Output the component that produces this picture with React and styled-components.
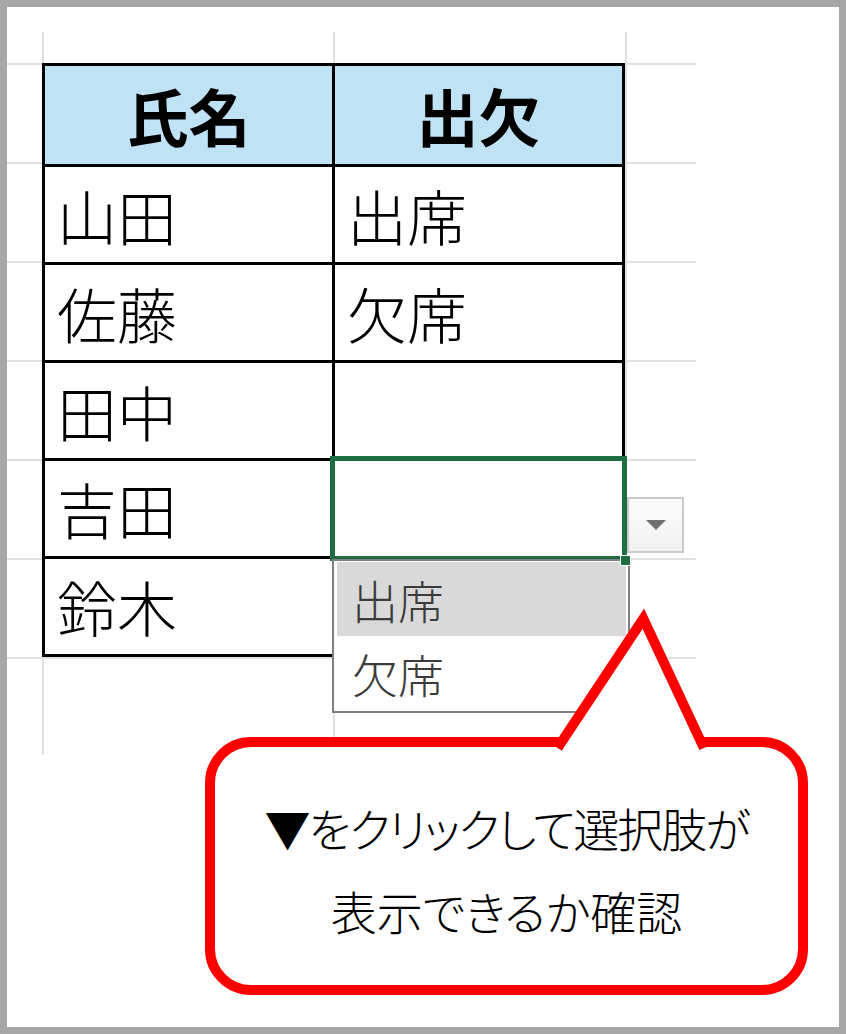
import React from 'react';
import styled, { createGlobalStyle } from 'styled-components';

const GlobalStyle = createGlobalStyle`
    html, body {
        margin: 0;
        padding: 0;
        background: #fff;
    }
    body {
        font-family: "Noto Sans CJK JP", "Noto Sans", sans-serif;
    }
`;

const Frame = styled.div`
    width: 846px;
    height: 1034px;
    box-sizing: border-box;
    border: 7px solid #a6a6a6;
    background: #fff;
    padding-top: 25px;
    overflow: hidden;
`;

const Sheet = styled.div`
    display: grid;
    grid-template-columns: 35px 291px 292px 71px;
    grid-template-rows: 31px repeat(6, 99px) 98px;
    width: 689px;
`;

const GridCell = styled.div`
    box-sizing: border-box;
    border-left: ${p => (p.$left ? '2px solid #e1e1e1' : 'none')};
    border-top: ${p => (p.$top ? '2px solid #e1e1e1' : 'none')};
`;

const TableArea = styled.div`
    grid-column: 2 / 4;
    grid-row: 2 / 8;
    position: relative;
    z-index: 1;
`;

const Table = styled.table`
    width: 100%;
    height: 100%;
    border-collapse: collapse;
    table-layout: fixed;
`;

const Th = styled.th`
    border: 3px solid #000;
    background: #bfe3f5;
    font-size: 62px;
    font-weight: 700;
    line-height: 1;
    text-align: center;
    padding: 0;
    color: #000;
`;

const Td = styled.td`
    position: ${p => (p.$selected ? 'relative' : 'static')};
    border: 3px solid #000;
    padding: 0 0 0 12px;
    font-size: 60px;
    font-weight: 300;
    line-height: 1;
    vertical-align: middle;
    white-space: nowrap;
    color: #000;
`;

const Selection = styled.div`
    position: absolute;
    inset: -5px;
    border: 5px solid #1e6e41;
    pointer-events: none;
    z-index: 2;
`;

const FillHandle = styled.div`
    position: absolute;
    right: -9px;
    bottom: -10px;
    width: 9px;
    height: 9px;
    background: #1e6e41;
    border: 1px solid #fff;
    z-index: 3;
`;

const DropButton = styled.div`
    position: absolute;
    left: calc(100% + 5px);
    top: 36px;
    width: 57px;
    height: 56px;
    box-sizing: border-box;
    border: 2px solid #c9c9c9;
    background: linear-gradient(#fbfbfb, #f1f1f1);
    display: flex;
    align-items: center;
    justify-content: center;
    z-index: 2;
`;

const Caret = styled.span`
    width: 0;
    height: 0;
    border-left: 10px solid transparent;
    border-right: 10px solid transparent;
    border-top: 10px solid #6f6f6f;
`;

const OptionList = styled.div`
    position: absolute;
    left: -3px;
    top: calc(100% + 3px);
    width: 298px;
    box-sizing: border-box;
    border: 2px solid #7f7f7f;
    background: #fff;
    padding: 1px 2px 1px 3px;
    display: flex;
    flex-direction: column;
    z-index: 2;
`;

const Option = styled.div`
    height: 74px;
    display: flex;
    align-items: center;
    padding-left: 15px;
    font-size: 46px;
    font-weight: 300;
    color: #3b3b3b;
    background: ${p => (p.$active ? '#d9d9d9' : 'transparent')};
`;

const Callout = styled.div`
    position: relative;
    z-index: 2;
    box-sizing: border-box;
    width: 603px;
    height: 258px;
    margin: -18px 0 0 198px;
    border: 10px solid #ff0000;
    border-radius: 46px;
    background: #fff;
    display: flex;
    flex-direction: column;
    align-items: center;
    justify-content: center;
    padding-top: 6px;
    font-size: 46px;
    font-weight: 300;
    line-height: 83px;
    color: #000;
    font-feature-settings: "palt" 1;
`;

const Pointer = styled.svg`
    position: absolute;
    left: 320px;
    top: -145px;
    width: 200px;
    height: 160px;
    overflow: visible;
`;

const Line = styled.div`
    white-space: nowrap;
    letter-spacing: ${p => (p.$tight ? '-2px' : '0')};
`;

const rows = [
    ['山田', '出席'],
    ['佐藤', '欠席'],
    ['田中', ''],
    ['吉田', null],
    ['鈴木', ''],
];

const gridCells = [];
for (let r = 0; r < 8; r++) {
    for (let c = 0; c < 4; c++) {
        const inTable = r >= 1 && r <= 6 && (c === 1 || c === 2);
        if (inTable) continue;
        gridCells.push(<GridCell key={`${r}-${c}`} $left={c > 0} $top={r > 0} />);
    }
}

const App = () => {
    return (
        <>
            <GlobalStyle />
            <Frame>
                <Sheet>
                    <TableArea>
                        <Table>
                            <tbody>
                                <tr>
                                    <Th>氏名</Th>
                                    <Th>出欠</Th>
                                </tr>
                                {rows.map(([name, status]) => (
                                    <tr key={name}>
                                        <Td>{name}</Td>
                                        {status === null ? (
                                            <Td $selected>
                                                <Selection />
                                                <FillHandle />
                                                <DropButton>
                                                    <Caret />
                                                </DropButton>
                                                <OptionList>
                                                    <Option $active>出席</Option>
                                                    <Option>欠席</Option>
                                                </OptionList>
                                            </Td>
                                        ) : (
                                            <Td>{status}</Td>
                                        )}
                                    </tr>
                                ))}
                            </tbody>
                        </Table>
                    </TableArea>
                    {gridCells}
                </Sheet>
                <Callout>
                    <Pointer viewBox="0 0 200 160">
                        <path
                            d="M 22.6 146 L 108.3 16.7 L 168.9 146"
                            fill="#fff"
                            stroke="#ff0000"
                            strokeWidth="10"
                            strokeLinejoin="miter"
                        />
                    </Pointer>
                    <Line $tight>▼をクリックして選択肢が</Line>
                    <Line>表示できるか確認</Line>
                </Callout>
            </Frame>
        </>
    );
};

export default App;
